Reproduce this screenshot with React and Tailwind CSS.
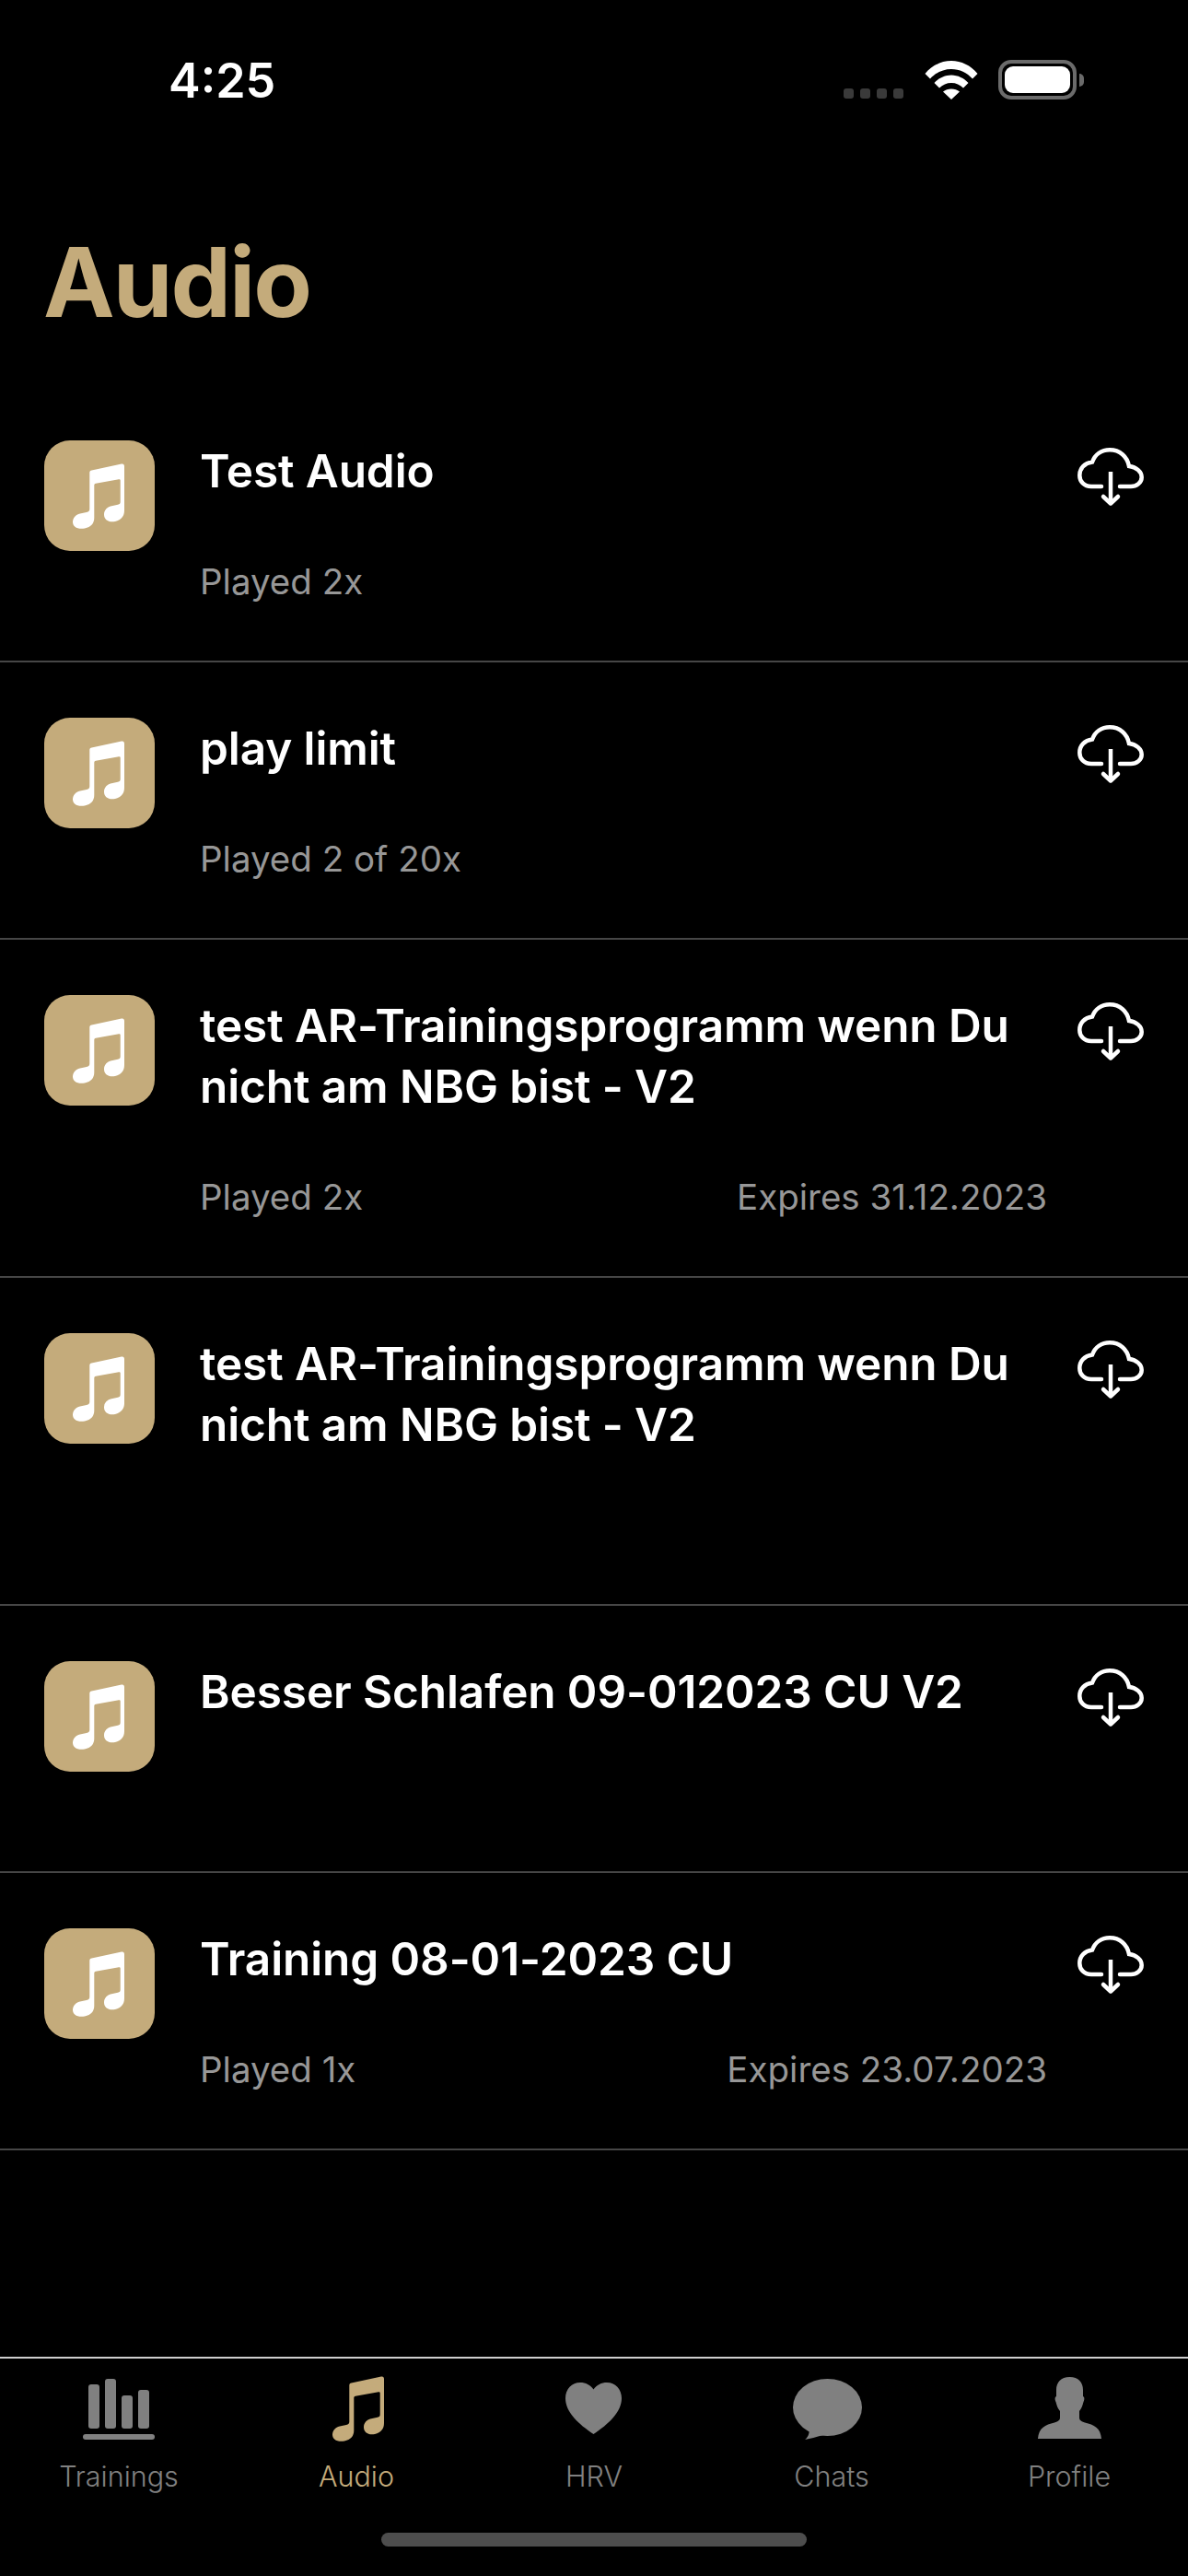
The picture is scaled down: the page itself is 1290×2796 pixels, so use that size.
const NOTE = "M18.3 10 C18.3 8.6 19.2 7.8 20.5 7.5 L53 0.5 C55 0.2 56 1 56 3 L56 51 C56 57 53 61 46 63 C39 64.5 34 61 34 55.5 C34 51 37 47.5 42 46.3 L49 44.8 C51 44.3 51.7 43.5 51.7 41.5 L51.7 18.5 C51.7 17.5 51 17 50 17.2 L25 21.7 C23.8 22 23.3 22.5 23.3 23.7 L23.3 59 C23.3 65 20 69 13 70.5 C5 72 0 68.5 0 63.5 C0 59 3 55.5 9 54.2 L15 53 C17.5 52.4 18.3 51.5 18.3 49.5 Z";

const rows = [
  { title: "Test Audio", played: "Played 2x" },
  { title: "play limit", played: "Played 2 of 20x" },
  { title: "test AR-Trainingsprogramm wenn Du nicht am NBG bist - V2", played: "Played 2x", expires: "Expires 31.12.2023" },
  { title: "test AR-Trainingsprogramm wenn Du nicht am NBG bist - V2" },
  { title: "Besser Schlafen 09-012023 CU V2" },
  { title: "Training 08-01-2023 CU", played: "Played 1x", expires: "Expires 23.07.2023" },
];

function Cloud() {
  return (
    <svg width="72" height="64" viewBox="0 0 72 64" fill="none" stroke="#fff" strokeWidth="4.5" className="shrink-0">
      <path strokeLinecap="round" d="M26 42 H15 C7 42 2.3 36.5 2.3 30 C2.3 22 8 16.5 16 15.5 C19 7.5 26 2.3 35 2.3 C46 2.3 54 9.5 56 20 C64 21 69.7 26 69.7 32 C69.7 38 64 42 58 42 H46" />
      <path d="M36 26 V60" />
      <path strokeLinecap="round" strokeLinejoin="round" d="M28 53 L36 60.5 L44 53" />
    </svg>
  );
}

function Row({ title, played, expires }) {
  return (
    <div className="flex items-start border-b-2 border-[#464646] pl-12 pr-12 pt-[60px]">
      <div className="flex h-[120px] w-[120px] shrink-0 items-center justify-center rounded-[28px] bg-[#c4ab7b]">
        <svg width="56" height="71" viewBox="0 0 56 71" className="translate-x-[-1px]">
          <path d={NOTE} fill="#fff" />
        </svg>
      </div>
      <div className="ml-[49px] w-[920px] shrink-0">
        <div className="text-[49.5px] font-semibold leading-[66px] tracking-[-0.1px] text-white">{title}</div>
        <div className="mt-[62px] mb-[60px] flex min-h-[40px] items-center justify-between text-[38.5px] leading-[51px] text-[#979797]">
          {played ? <span>{played}</span> : null}
          {expires ? <span>{expires}</span> : null}
        </div>
      </div>
      <div className="ml-[33px] pt-[8px]">
        <Cloud />
      </div>
    </div>
  );
}

function TabIcon({ children }) {
  return (
    <svg width="90" height="72" viewBox="0 0 90 72" fill="#808080">
      {children}
    </svg>
  );
}

const tabs = [
  {
    label: "Trainings",
    icon: (
      <TabIcon>
        <rect x="12" y="9" width="12" height="48" rx="3" />
        <rect x="30" y="3" width="12" height="54" rx="3" />
        <rect x="48" y="21" width="12" height="36" rx="3" />
        <rect x="66" y="15" width="12" height="42" rx="3" />
        <rect x="6" y="63" width="78" height="6" rx="3" />
      </TabIcon>
    ),
  },
  {
    label: "Audio",
    active: true,
    icon: (
      <TabIcon>
        <path d={NOTE} transform="translate(19,0)" fill="#c4ab7b" />
      </TabIcon>
    ),
  },
  {
    label: "HRV",
    icon: (
      <TabIcon>
        <path transform="translate(14,7)" d="M30.5 7.5 C27 2.5 22 0 16 0 C7 0 0 7 0 17 C0 32 14 45 30.5 56 C47 45 61 32 61 17 C61 7 54 0 45 0 C39 0 34 2.5 30.5 7.5 Z" />
      </TabIcon>
    ),
  },
  {
    label: "Chats",
    icon: (
      <TabIcon>
        <ellipse cx="40.5" cy="34" rx="37.5" ry="31" />
        <path d="M21 56 C21 63 19 67 16 69 C22 68 28 66 36 64 Z" />
      </TabIcon>
    ),
  },
  {
    label: "Profile",
    icon: (
      <TabIcon>
        <path transform="translate(11,1)" d="M34.5 0 C25 0 20 6 20 14 L20 21 C18 22 18.5 25 19.5 27 C20.5 31 21.5 34 24 37 L24 44 C24 47 22 48 18 49.5 C8 52 1 55 0 67 H69 C68 55 61 52 51 49.5 C47 48 45 47 45 44 L45 37 C47.5 34 48.5 31 49.5 27 C50.5 25 51 22 49 21 L49 14 C49 6 44 0 34.5 0 Z" />
      </TabIcon>
    ),
  },
];

export default function App() {
  return (
    <div className="flex h-[2796px] w-[1290px] flex-col overflow-hidden bg-black font-['Inter','Liberation_Sans',sans-serif]">
      <div className="flex h-[132px] items-start pt-[57px]">
        <div className="ml-[183px] text-[52px] font-semibold leading-[62px] text-white">4:25</div>
        <div className="ml-auto mr-[113px] mt-[8px] flex items-end">
          <div className="mb-[1px] flex gap-[7px]">
            <div className="h-[11px] w-[11px] rounded-[3px] bg-[#3a3a3a]" />
            <div className="h-[11px] w-[11px] rounded-[3px] bg-[#3a3a3a]" />
            <div className="h-[11px] w-[11px] rounded-[3px] bg-[#3a3a3a]" />
            <div className="h-[11px] w-[11px] rounded-[3px] bg-[#3a3a3a]" />
          </div>
          <svg width="58" height="42" viewBox="0 0 58 42" className="ml-[23px]" fill="#fff">
            <path d="M0.5 14 C8 5 18 0 29 0 C40 0 50 5 57.5 14 L52 19.5 C46 13 38 9 29 9 C20 9 12 13 6 19.5 Z" />
            <path d="M10.5 24 C15 19 22 15.5 29 15.5 C36 15.5 43 19 47.5 24 L42 29.5 C38.5 26 34 24 29 24 C24 24 19.5 26 16 29.5 Z" />
            <path d="M20 33.5 C22.5 31.5 25.5 30.5 29 30.5 C32.5 30.5 35.5 31.5 38 33.5 L29 42 Z" />
          </svg>
          <div className="ml-[22px] flex items-center">
            <div className="flex h-[43px] w-[85px] items-center justify-center rounded-[14px] border-[4px] border-[#6b6b6b]">
              <div className="h-[29px] w-[71px] rounded-[9px] bg-white" />
            </div>
            <div className="ml-[3px] h-[14px] w-[5px] rounded-r-full bg-[#6b6b6b]" />
          </div>
        </div>
      </div>

      <div className="h-[286px] pl-[47px] pt-[144px] text-[104px] font-bold leading-[60px] tracking-[-2px] text-[#c4ab7b]">Audio</div>

      <div className="flex flex-col">
        {rows.map((r, i) => (
          <Row key={i} {...r} />
        ))}
      </div>

      <div className="mt-auto h-[238px] border-t-2 border-[#cfcfcf]">
        <div className="flex pt-[19px]">
          {tabs.map((t) => (
            <div key={t.label} className="flex w-[258px] flex-col items-center">
              {t.icon}
              <div className={`mt-[17px] text-[30.5px] font-light leading-[40px] ${t.active ? "text-[#c4ab7b]" : "text-[#808080]"}`}>
                {t.label}
              </div>
            </div>
          ))}
        </div>
        <div className="mx-auto mt-[41px] h-[15px] w-[462px] rounded-full bg-[#4d4d4d]" />
      </div>
    </div>
  );
}
